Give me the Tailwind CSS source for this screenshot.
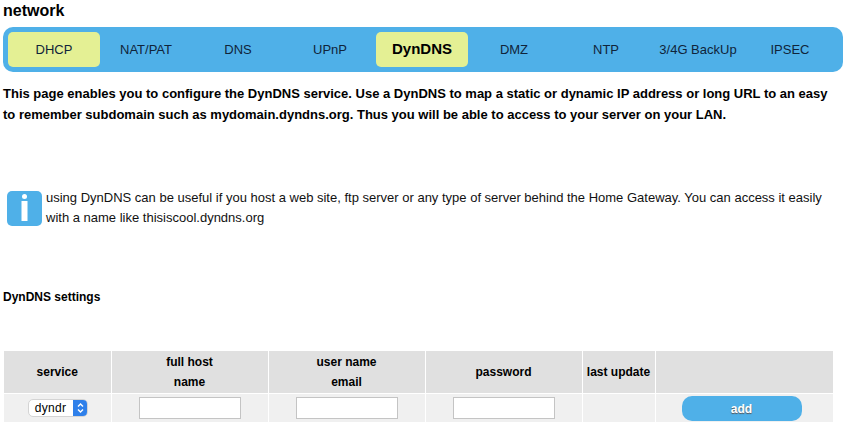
<!DOCTYPE html>
<html lang="en">
<head>
    <meta charset="UTF-8">
    <title>network</title>
    <script src="https://cdn.jsdelivr.net/npm/@tailwindcss/browser@4"></script>
</head>
<body class="bg-white text-black font-['Liberation_Sans',Arial,sans-serif] overflow-hidden">
    <div class="w-[862px] h-[445px] pl-[3px]">
        <h1 class="text-[16px] font-bold leading-[20px] pt-[1px] h-[27px]">network</h1>

        <ul class="flex w-[840px] h-[45px] p-[5px] bg-[#4fb0e8] rounded-[10px] text-[13px] text-[#10243a]">
            <li class="w-[92px] flex items-center justify-center rounded-[5px] bg-[#e4f094]">DHCP</li>
            <li class="w-[92px] flex items-center justify-center">NAT/PAT</li>
            <li class="w-[92px] flex items-center justify-center">DNS</li>
            <li class="w-[92px] flex items-center justify-center">UPnP</li>
            <li class="w-[92px] flex items-center justify-center rounded-[5px] bg-[#e4f094] font-bold text-[15px] text-black">DynDNS</li>
            <li class="w-[92px] flex items-center justify-center">DMZ</li>
            <li class="w-[92px] flex items-center justify-center">NTP</li>
            <li class="w-[92px] flex items-center justify-center">3/4G BackUp</li>
            <li class="w-[92px] flex items-center justify-center">IPSEC</li>
        </ul>

        <p class="mt-[11px] text-[13px] font-bold leading-[21px]">This page enables you to configure the DynDNS service. Use a DynDNS to map a static or dynamic IP address or long URL to an easy<br>to remember subdomain such as mydomain.dyndns.org. Thus you will be able to access to your server on your LAN.</p>

        <div class="flex mt-[63px] ml-[4px] items-center gap-[4px]">
            <svg class="w-[35px] h-[35px] shrink-0" viewBox="0 0 35 35">
                <rect width="35" height="35" rx="5" fill="#4fb0e8"/>
                <circle cx="17.5" cy="5.5" r="2.5" fill="#fff"/>
                <rect x="14.5" y="10" width="6" height="20" fill="#fff"/>
            </svg>
            <p class="text-[13px] leading-[20px] text-[#111]">using DynDNS can be useful if you host a web site, ftp server or any type of server behind the Home Gateway. You can access it easily<br>with a name like thisiscool.dyndns.org</p>
        </div>

        <h2 class="mt-[61px] text-[12px] font-bold leading-[16px]">DynDNS settings</h2>

        <table class="mt-[46px] ml-[1px] w-[829px] table-fixed border-collapse text-[12px]">
            <thead>
                <tr class="h-[42px] bg-[#e0e0e0] font-bold text-center leading-[20px]">
                    <td class="w-[107px] border-r border-b border-white">service</td>
                    <td class="w-[157px] border-r border-b border-white">full host<br>name</td>
                    <td class="w-[157px] border-r border-b border-white">user name<br>email</td>
                    <td class="w-[157px] border-r border-b border-white">password</td>
                    <td class="w-[73px] border-r border-b border-white">last update</td>
                    <td class="border-b border-white"></td>
                </tr>
            </thead>
            <tbody>
                <tr class="h-[29px] bg-[#f0f0f0] text-center">
                    <td class="border-r border-white">
                        <div class="inline-flex w-[60px] h-[18px] ml-[1px] align-middle rounded-[5px] bg-white border border-[#d4d4d4] overflow-hidden">
                            <span class="flex-1 text-[12px] tracking-[0.3px] leading-[16px] text-left pl-[6px]">dyndr</span>
                            <span class="w-[15px] -my-[1px] -mr-[1px] bg-[#2f80ea] rounded-r-[5px] flex items-center justify-center">
                                <svg class="w-[7px] h-[12px]" viewBox="0 0 7 12" fill="none" stroke="#fff" stroke-width="1.4">
                                    <path d="M1 4.5 L3.5 2 L6 4.5"/>
                                    <path d="M1 7.5 L3.5 10 L6 7.5"/>
                                </svg>
                            </span>
                        </div>
                    </td>
                    <td class="border-r border-white"><input type="text" class="block mx-auto w-[102px] h-[22px] bg-white border border-[#c4c4c4]"></td>
                    <td class="border-r border-white"><input type="text" class="block mx-auto w-[102px] h-[22px] bg-white border border-[#c4c4c4]"></td>
                    <td class="border-r border-white"><input type="text" class="block mx-auto w-[102px] h-[22px] bg-white border border-[#c4c4c4]"></td>
                    <td class="border-r border-white"></td>
                    <td>
                        <button class="block ml-[26px] mt-[2px] w-[120px] h-[25px] rounded-[10px] bg-[#4fb0e8] text-white font-bold text-[12px] [text-shadow:0_1px_1px_#555]">add</button>
                    </td>
                </tr>
            </tbody>
        </table>
    </div>
</body>
</html>
